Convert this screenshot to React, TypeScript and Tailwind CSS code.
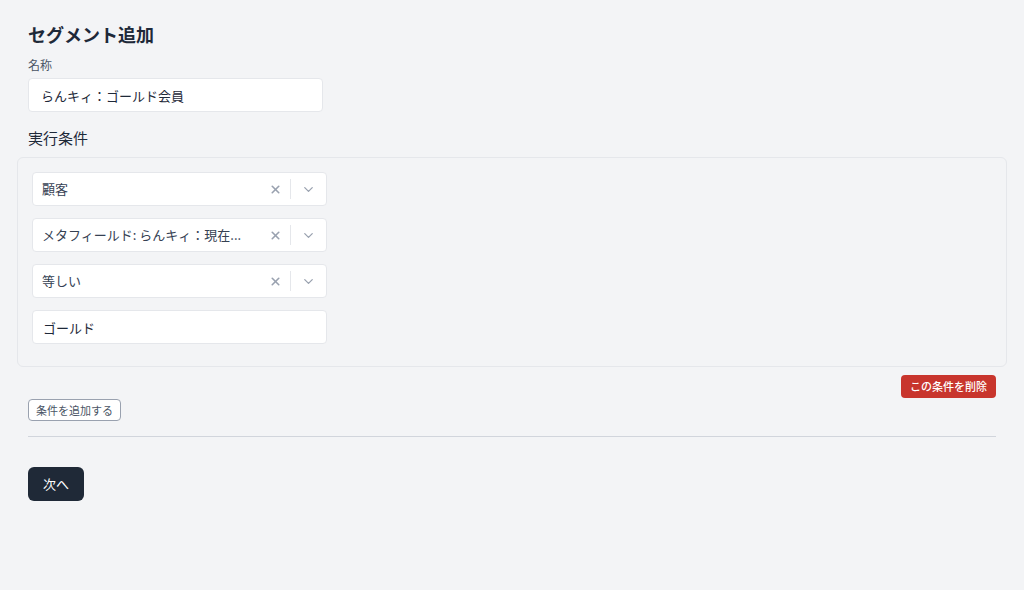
import { X, ChevronDown } from 'lucide-react';

const font = { fontFamily: '"Noto Sans CJK JP", "Noto Sans", sans-serif' };

function SelectBox({ value }: { value: string }) {
  return (
    <div className="flex h-[34px] w-[295px] items-center rounded border border-gray-200 bg-white">
      <div className="flex-1 truncate pl-[9px] text-[13px] text-gray-700">{value}</div>
      <div className="flex items-center">
        <X className="mx-[8px] h-[13px] w-[13px] text-gray-400" strokeWidth={3} />
        <div className="h-[20px] w-px bg-gray-200" />
        <ChevronDown className="mx-[10px] h-[15px] w-[15px] text-gray-400" strokeWidth={2} />
      </div>
    </div>
  );
}

export default function App() {
  return (
    <div className="min-h-screen bg-gray-100 px-7 pt-[22px]" style={font}>
      <h1 className="text-lg font-bold leading-6 text-gray-800">セグメント追加</h1>

      <div className="mt-[11px] text-[12px] leading-4 text-gray-600">名称</div>
      <input
        className="mt-[5px] block h-[34px] w-[295px] rounded border border-gray-200 bg-white px-3 text-[13px] text-gray-800 outline-none"
        defaultValue="らんキィ：ゴールド会員"
      />

      <h2 className="mt-[16px] text-[15px] font-normal leading-5 text-gray-800">実行条件</h2>

      {/* conditions panel */}
      <div className="-mx-[11px] mt-[9px] flex h-[210px] flex-col gap-3 rounded-md border border-gray-200 px-[14px] pt-[14px]">
        <SelectBox value="顧客" />
        <SelectBox value="メタフィールド: らんキィ：現在..." />
        <SelectBox value="等しい" />
        <input
          className="h-[34px] w-[295px] rounded border border-gray-200 bg-white px-[10px] text-[13px] text-gray-800 outline-none"
          defaultValue="ゴールド"
        />
      </div>

      <div className="mt-2 flex justify-end">
        <button className="h-[23px] rounded bg-[#c8352d] px-[9px] text-[11px] font-medium text-white">
          この条件を削除
        </button>
      </div>

      <button className="mt-[1px] block h-[22px] rounded border border-gray-400 bg-white px-[7px] text-[11px] text-gray-600">
        条件を追加する
      </button>

      <hr className="mt-[15px] border-t border-gray-300" />

      <button className="mt-[30px] block h-[34px] rounded-md bg-[#1f2937] px-[15px] text-[13px] text-white">
        次へ
      </button>
    </div>
  );
}
